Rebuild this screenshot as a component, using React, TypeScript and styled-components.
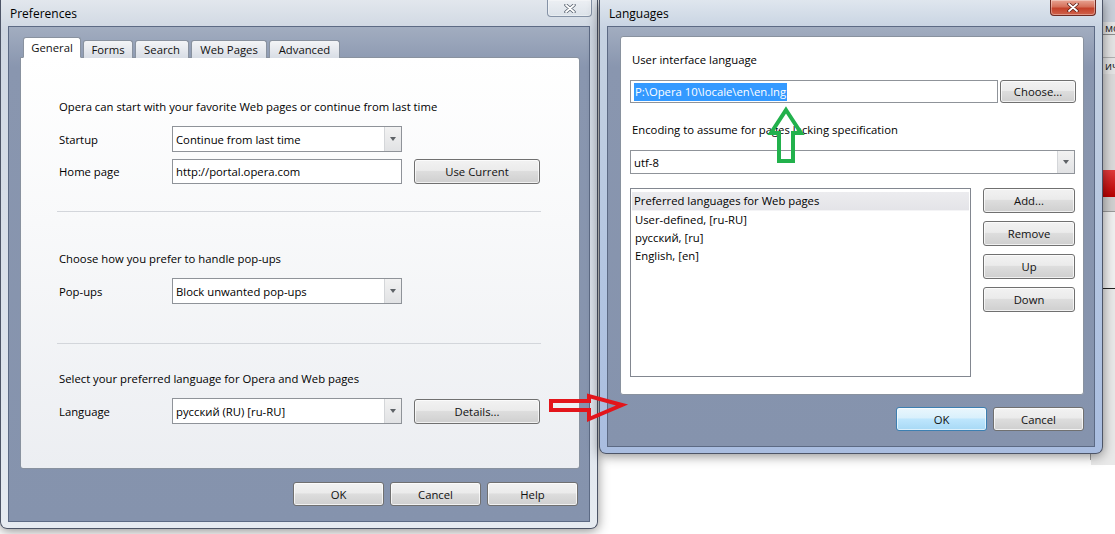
import React from 'react'
import styled, { createGlobalStyle, css } from 'styled-components'

const GlobalStyle = createGlobalStyle`
  html, body {
    margin: 0;
    padding: 0;
  }
  body {
    background: #fff;
    font-family: "Open Sans", "Noto Sans", sans-serif;
    font-size: 11.3px;
    color: #000;
  }
`

const Desktop = styled.div`
  position: relative;
  width: 1115px;
  height: 534px;
  overflow: hidden;
  background: #fff;
`

// bit of the application behind the dialogs, visible at the right edge
const BackApp = styled.div`
  position: absolute;
  left: 1090px;
  top: 0;
  width: 25px;
  height: 460px;
  display: flex;
  flex-direction: column;
  background: #e4e4e4;
  border-left: 1px solid #9a9a9a;
`

const BackRow = styled.div<{ $h: number; $bg?: string; $line?: string }>`
  height: ${(p) => p.$h}px;
  flex: none;
  padding-left: 14px;
  background: ${(p) => p.$bg || 'transparent'};
  border-bottom: ${(p) => (p.$line ? `1px solid ${p.$line}` : 'none')};
  font-size: 11px;
  line-height: ${(p) => p.$h}px;
  white-space: nowrap;
  overflow: hidden;
  color: #222;
`

const Window = styled.div<{ $x: number; $w: number; $h: number; $active?: boolean }>`
  position: absolute;
  left: ${(p) => p.$x}px;
  top: 0;
  width: ${(p) => p.$w}px;
  height: ${(p) => p.$h}px;
  box-sizing: border-box;
  display: flex;
  flex-direction: column;
  padding: 0 7px 6px 7px;
  border: 1px solid #4d5567;
  border-top: none;
  border-radius: 0 0 7px 7px;
  box-shadow: 0 2px 12px rgba(0, 0, 0, 0.45);
  background: ${(p) =>
    p.$active
      ? 'linear-gradient(180deg, #dfe6ee 0%, #c6d2e1 30px, #b3c5e1 60%, #a9bde0 100%)'
      : 'linear-gradient(180deg, #e2e7ed 0%, #cfd7e2 30px, #dde3ec 70%, #e6ebf1 100%)'};
`

const TitleBar = styled.div`
  height: 26px;
  flex: none;
  display: flex;
  align-items: flex-start;
  justify-content: space-between;
`

const Title = styled.div`
  padding: 5px 0 0 2px;
  font-size: 12px;
  color: #000;
`

const CloseButton = styled.div<{ $active?: boolean }>`
  width: ${(p) => (p.$active ? 46 : 45)}px;
  height: ${(p) => (p.$active ? 16 : 17)}px;
  margin-right: ${(p) => (p.$active ? -1 : -2)}px;
  box-sizing: border-box;
  display: flex;
  align-items: center;
  justify-content: center;
  border: 1px solid ${(p) => (p.$active ? '#6e2a22' : '#8592a6')};
  border-top: none;
  border-radius: 0 0 4px 4px;
  background: ${(p) =>
    p.$active
      ? 'linear-gradient(180deg, #e8a493 0%, #d5705a 45%, #c4412a 55%, #d0634c 100%)'
      : 'linear-gradient(180deg, rgba(255,255,255,0.35), rgba(255,255,255,0.1))'};
  box-shadow: inset 0 0 0 1px rgba(255, 255, 255, 0.35);

  svg {
    width: 12px;
    height: 9px;
  }
`

const Client = styled.div<{ $pad: string }>`
  flex: 1;
  display: flex;
  flex-direction: column;
  padding: ${(p) => p.$pad};
  border: 1px solid #5c6a84;
  background: linear-gradient(180deg, #a2adc0 0%, #8996af 40px, #8593ad 100%);
`

const TabStrip = styled.div`
  display: flex;
  align-items: flex-end;
  gap: 2px;
  height: 20px;
  margin-left: 3px;
  margin-bottom: -1px;
  position: relative;
  z-index: 1;
`

const Tab = styled.div<{ $active?: boolean; $w: number }>`
  width: ${(p) => p.$w}px;
  box-sizing: border-box;
  text-align: center;
  border: 1px solid #89929f;
  border-radius: 3px 3px 0 0;
  color: #111;
  ${(p) =>
    p.$active
      ? css`
          height: 21px;
          line-height: 20px;
          background: #fff;
          border-bottom-color: #fff;
        `
      : css`
          height: 18px;
          line-height: 18px;
          background: linear-gradient(180deg, #f3f4f6 0%, #e6e9ee 50%, #d8dde5 100%);
          border-bottom: none;
        `}
`

const TabPanel = styled.div`
  flex: 1;
  display: flex;
  flex-direction: column;
  padding: 0 38px 0 36px;
  border: 1px solid #89929f;
  border-radius: 0 3px 3px 3px;
  background: linear-gradient(180deg, #ffffff 0%, #f8f9fa 40%, #eceef2 100%);
`

const Section = styled.div<{ $top: number; $bottom: number }>`
  display: flex;
  flex-direction: column;
  gap: 7px;
  padding: ${(p) => p.$top}px 0 ${(p) => p.$bottom}px 0;
`

const Heading = styled.div`
  height: 18px;
  line-height: 18px;
  padding-left: 2px;
  margin-bottom: 3px;
  white-space: nowrap;
`

const Divider = styled.div`
  height: 1px;
  background: #d3d6db;
`

const FormRow = styled.div`
  display: flex;
  align-items: center;
  gap: 12px;
`

const FieldLabel = styled.div`
  width: 101px;
  padding-left: 2px;
`

const Field = styled.div<{ $w?: number; $h?: number; $flex?: boolean }>`
  width: ${(p) => (p.$flex ? 'auto' : `${p.$w}px`)};
  flex: ${(p) => (p.$flex ? 1 : 'none')};
  height: ${(p) => p.$h || 26}px;
  box-sizing: border-box;
  display: flex;
  align-items: stretch;
  border: 1px solid #8f9399;
  background: #fff;
`

const FieldText = styled.div`
  flex: 1;
  display: flex;
  align-items: center;
  padding-left: 3px;
  white-space: nowrap;
  overflow: hidden;
`

const Selected = styled.span`
  background: #3399ff;
  color: #fff;
  padding: 1px 1px 2px 1px;
`

const DropArrow = styled.div`
  width: 16px;
  display: flex;
  align-items: center;
  justify-content: center;
  border-left: 1px solid #d4d6d9;
  background: linear-gradient(180deg, #f2f2f2, #e1e2e4);

  &::after {
    content: '';
    border-left: 3.5px solid transparent;
    border-right: 3.5px solid transparent;
    border-top: 4px solid #5e6266;
  }
`

const Button = styled.div<{ $w: number; $h?: number; $default?: boolean }>`
  width: ${(p) => p.$w}px;
  height: ${(p) => p.$h || 25}px;
  flex: none;
  box-sizing: border-box;
  display: flex;
  align-items: center;
  justify-content: center;
  border-radius: 3px;
  color: #111;
  ${(p) =>
    p.$default
      ? css`
          border: 1px solid #3c7fb1;
          background: linear-gradient(180deg, #eaf6fd 0%, #d9f0fc 45%, #bee6fd 50%, #a7d9f5 100%);
          box-shadow: inset 0 0 0 1px rgba(255, 255, 255, 0.6);
        `
      : css`
          border: 1px solid #707070;
          background: linear-gradient(180deg, #f2f2f2 0%, #ebebeb 45%, #dddddd 50%, #cfcfcf 100%);
          box-shadow: inset 0 0 0 1px rgba(255, 255, 255, 0.7);
        `}
`

const ButtonBar = styled.div<{ $top: number; $right: number }>`
  display: flex;
  justify-content: flex-end;
  gap: 6px;
  margin-top: ${(p) => p.$top}px;
  padding-right: ${(p) => p.$right}px;
`

const WhitePanel = styled.div`
  flex: 1;
  display: flex;
  flex-direction: column;
  padding: 15px 8px 0 9px;
  border: 1px solid #89929f;
  border-radius: 3px;
  background: #fff;
`

const PlainLabel = styled.div<{ $gap: number }>`
  height: 16px;
  line-height: 16px;
  padding-left: 2px;
  margin-bottom: ${(p) => p.$gap}px;
`

const Stack = styled.div<{ $gap: number; $bottom?: number }>`
  display: flex;
  gap: ${(p) => p.$gap}px;
  margin-bottom: ${(p) => p.$bottom || 0}px;
`

const ListBox = styled.div`
  width: 342px;
  height: 189px;
  box-sizing: border-box;
  display: flex;
  flex-direction: column;
  padding: 3px 1px;
  border: 1px solid #828790;
  background: #fff;
`

const ListHeader = styled.div`
  height: 18px;
  line-height: 18px;
  padding-left: 2px;
  background: linear-gradient(180deg, #ececef 0%, #e4e4e8 100%);
  border-bottom: 1px solid #f4f4f6;
`

const ListItem = styled.div`
  height: 18px;
  line-height: 18px;
  padding-left: 3px;
`

const SideButtons = styled.div`
  display: flex;
  flex-direction: column;
  gap: 8px;
`

const Overlay = styled.svg`
  position: absolute;
  left: 0;
  top: 0;
  pointer-events: none;
`

const CloseGlyph = ({ active }: { active?: boolean }) => (
  <svg viewBox="0 0 12 9">
    <path
      d="M2 1 L10 8 M10 1 L2 8"
      stroke={active ? '#5a1d15' : '#56606e'}
      strokeWidth="3.4"
      strokeLinecap="round"
    />
    <path d="M2 1 L10 8 M10 1 L2 8" stroke="#fff" strokeWidth="1.8" strokeLinecap="round" />
  </svg>
)

const Select = ({ value, w, flex, h }: { value: string; w?: number; flex?: boolean; h?: number }) => (
  <Field $w={w} $flex={flex} $h={h}>
    <FieldText>{value}</FieldText>
    <DropArrow />
  </Field>
)

const tabs = [
  { name: 'General', w: 58 },
  { name: 'Forms', w: 50 },
  { name: 'Search', w: 54 },
  { name: 'Web Pages', w: 76 },
  { name: 'Advanced', w: 71 },
]

const Preferences = () => (
  <Window $x={0} $w={598} $h={529}>
    <TitleBar>
      <Title>Preferences</Title>
      <CloseButton>
        <CloseGlyph />
      </CloseButton>
    </TitleBar>
    <Client $pad="11px 9px 15px 11px">
      <TabStrip>
        {tabs.map((t, i) => (
          <Tab key={t.name} $w={t.w} $active={i === 0}>
            {t.name}
          </Tab>
        ))}
      </TabStrip>
      <TabPanel>
        <Section $top={40} $bottom={27}>
          <Heading>Opera can start with your favorite Web pages or continue from last time</Heading>
          <FormRow>
            <FieldLabel>Startup</FieldLabel>
            <Select value="Continue from last time" w={230} />
          </FormRow>
          <FormRow>
            <FieldLabel>Home page</FieldLabel>
            <Field $w={230} $h={25}>
              <FieldText>http://portal.opera.com</FieldText>
            </Field>
            <Button $w={126}>Use Current</Button>
          </FormRow>
        </Section>
        <Divider />
        <Section $top={38} $bottom={39}>
          <Heading>Choose how you prefer to handle pop-ups</Heading>
          <FormRow>
            <FieldLabel>Pop-ups</FieldLabel>
            <Select value="Block unwanted pop-ups" w={230} />
          </FormRow>
        </Section>
        <Divider />
        <Section $top={26} $bottom={0}>
          <Heading>Select your preferred language for Opera and Web pages</Heading>
          <FormRow>
            <FieldLabel>Language</FieldLabel>
            <Select value="русский (RU) [ru-RU]" w={230} />
            <Button $w={126}>Details...</Button>
          </FormRow>
        </Section>
      </TabPanel>
      <ButtonBar $top={13} $right={2}>
        <Button $w={91} $h={24}>OK</Button>
        <Button $w={91} $h={24}>Cancel</Button>
        <Button $w={91} $h={24}>Help</Button>
      </ButtonBar>
    </Client>
  </Window>
)

const Languages = () => (
  <Window $x={599} $w={504} $h={454} $active>
    <TitleBar>
      <Title>Languages</Title>
      <CloseButton $active>
        <CloseGlyph active />
      </CloseButton>
    </TitleBar>
    <Client $pad="9px 10px 15px 12px">
      <WhitePanel>
        <PlainLabel $gap={12}>User interface language</PlainLabel>
        <Stack $gap={2} $bottom={19}>
          <Field $w={368} $h={23}>
            <FieldText>
              <Selected>P:\Opera 10\locale\en\en.lng</Selected>
            </FieldText>
          </Field>
          <Button $w={76} $h={23}>Choose...</Button>
        </Stack>
        <PlainLabel $gap={12}>Encoding to assume for pages lacking specification</PlainLabel>
        <Stack $gap={0} $bottom={14}>
          <Select value="utf-8" flex h={24} />
        </Stack>
        <Stack $gap={12}>
          <ListBox>
            <ListHeader>Preferred languages for Web pages</ListHeader>
            <ListItem>User-defined, [ru-RU]</ListItem>
            <ListItem>русский, [ru]</ListItem>
            <ListItem>English, [en]</ListItem>
          </ListBox>
          <SideButtons>
            <Button $w={92}>Add...</Button>
            <Button $w={92}>Remove</Button>
            <Button $w={92}>Up</Button>
            <Button $w={92}>Down</Button>
          </SideButtons>
        </Stack>
      </WhitePanel>
      <ButtonBar $top={12} $right={0}>
        <Button $w={91} $h={24} $default>OK</Button>
        <Button $w={91} $h={24}>Cancel</Button>
      </ButtonBar>
    </Client>
  </Window>
)

export default function App() {
  return (
    <Desktop>
      <GlobalStyle />
      <BackApp>
        <BackRow $h={22} $bg="#c9d0da" />
        <BackRow $h={12} $line="#8c8c8c">мо</BackRow>
        <BackRow $h={22} $line="#b0b0b0" />
        <BackRow $h={16}>ичн</BackRow>
        <BackRow $h={96} $bg="#dadada" />
        <BackRow $h={27} $bg="linear-gradient(180deg, #e23c3c, #b80000)" />
        <BackRow $h={14} $bg="#d0d0d0" $line="#9a9a9a" />
        <BackRow $h={76} $bg="#f0f0f0" $line="#222" />
        <BackRow $h={176} $bg="#e9e9e9" />
      </BackApp>
      <Preferences />
      <Languages />
      <Overlay width="1115" height="534" viewBox="0 0 1115 534">
        <polygon
          points="551,401 589,401 589,396 622,405 589,419 589,410 551,410"
          fill="none"
          stroke="#e3151b"
          strokeWidth="4"
          strokeLinejoin="miter"
        />
        <polygon
          points="786,110 801,133 793,133 793,161 779,161 779,133 771,133"
          fill="none"
          stroke="#22b14c"
          strokeWidth="4"
          strokeLinejoin="miter"
        />
      </Overlay>
    </Desktop>
  )
}
